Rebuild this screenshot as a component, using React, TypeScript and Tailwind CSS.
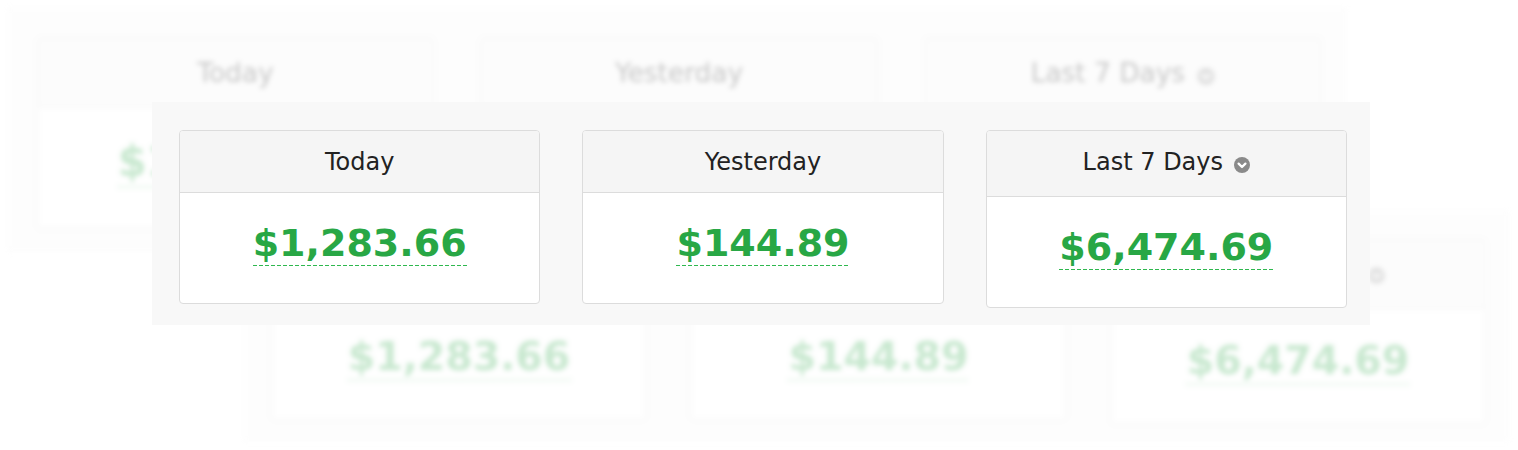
import React from "react";

type CardProps = { title: string; amount: string; icon?: boolean };

function ChevronCircle() {
  return (
    <svg width="16" height="16" viewBox="0 0 16 16" className="mt-[9px] ml-[11px] shrink-0">
      <circle cx="8" cy="8" r="8" fill="#8a8a8a" />
      <path d="M4.6 6.6 L8 10 L11.4 6.6" fill="none" stroke="#ffffff" strokeWidth="2.3" strokeLinecap="round" strokeLinejoin="round" />
    </svg>
  );
}

function Card({ title, amount, icon }: CardProps) {
  return (
    <div className="bg-white border border-[#dcdcdc] rounded-[4px] overflow-hidden">
      <div
        className={
          icon
            ? "h-[66px] bg-[#f5f5f5] border-b border-[#dcdcdc] pt-[17px] flex justify-center items-start"
            : "h-[62px] bg-[#f5f5f5] border-b border-[#dcdcdc] pt-[17px] flex justify-center items-start"
        }
      >
        <span className="text-[24px] leading-[28px] text-[#222222]">{title}</span>
        {icon ? <ChevronCircle /> : null}
      </div>
      <div className="h-[110px] pt-[28px] text-center">
        <span className="text-[38px] leading-[44px] font-bold text-[#28a745] pb-[1px] bg-[linear-gradient(to_right,#2fb84f_4px,transparent_4px)] bg-[length:6px_1px] bg-repeat-x bg-[position:0_100%]">
          {amount}
        </span>
      </div>
    </div>
  );
}

function Panel() {
  return (
    <div className="w-[1218px] h-[223px] bg-[#f8f8f8] pt-[28px] pl-[27px] pr-[23px] grid grid-cols-3 gap-x-[42px] items-start font-['DejaVu_Sans',sans-serif]">
      <Card title="Today" amount="$1,283.66" />
      <Card title="Yesterday" amount="$144.89" />
      <Card title="Last 7 Days" amount="$6,474.69" icon />
    </div>
  );
}

export default function App() {
  return (
    <div className="relative w-[1518px] h-[450px] bg-white overflow-hidden pt-[102px] pl-[152px]">
      <div className="absolute left-[7px] top-[7px] origin-top-left scale-[1.1] opacity-25 blur-[2.5px]" aria-hidden="true">
        <Panel />
      </div>
      <div className="absolute left-[243px] top-[210px] origin-top-left scale-[1.04] opacity-25 blur-[2.5px]" aria-hidden="true">
        <Panel />
      </div>
      <div className="relative z-10">
        <Panel />
      </div>
    </div>
  );
}
